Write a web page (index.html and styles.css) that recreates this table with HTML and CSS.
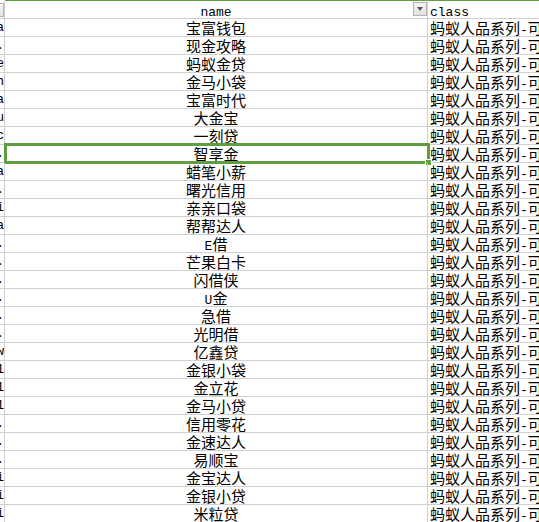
FILE: index.html
```html
<!DOCTYPE html>
<html>
<head>
<meta charset="utf-8">
<link rel="stylesheet" href="styles.css">
</head>
<body>
<div class="sheet">
  <div class="row head">
    <div class="c1"><span class="fbtn"></span></div>
    <div class="c2 hc2"><span class="lat">name</span><span class="fbtn abs"></span></div>
    <div class="c3"><span class="lat">class</span></div>
  </div>
  <div class="row"><div class="c1"><span class="lat">a</span></div><div class="c2">宝富钱包</div><div class="c3">蚂蚁人品系列<span class="lat">-</span>可信</div></div>
  <div class="row"><div class="c1"><span class="lat">.</span></div><div class="c2">现金攻略</div><div class="c3">蚂蚁人品系列<span class="lat">-</span>可信</div></div>
  <div class="row"><div class="c1"><span class="lat">e</span></div><div class="c2">蚂蚁金贷</div><div class="c3">蚂蚁人品系列<span class="lat">-</span>可信</div></div>
  <div class="row"><div class="c1"><span class="lat">h</span></div><div class="c2">金马小袋</div><div class="c3">蚂蚁人品系列<span class="lat">-</span>可信</div></div>
  <div class="row"><div class="c1"><span class="lat">a</span></div><div class="c2">宝富时代</div><div class="c3">蚂蚁人品系列<span class="lat">-</span>可信</div></div>
  <div class="row"><div class="c1"><span class="lat">u</span></div><div class="c2">大金宝</div><div class="c3">蚂蚁人品系列<span class="lat">-</span>可信</div></div>
  <div class="row"><div class="c1"><span class="lat">c</span></div><div class="c2">一刻贷</div><div class="c3">蚂蚁人品系列<span class="lat">-</span>可信</div></div>
  <div class="row sel"><div class="c1"><span class="lat">.</span></div><div class="c2">智享金</div><div class="c3">蚂蚁人品系列<span class="lat">-</span>可信</div><div class="selbox"></div><div class="handle"></div></div>
  <div class="row"><div class="c1"><span class="lat">a</span></div><div class="c2">蜡笔小薪</div><div class="c3">蚂蚁人品系列<span class="lat">-</span>可信</div></div>
  <div class="row"><div class="c1"><span class="lat">.</span></div><div class="c2">曙光信用</div><div class="c3">蚂蚁人品系列<span class="lat">-</span>可信</div></div>
  <div class="row"><div class="c1"><span class="lat">i</span></div><div class="c2">亲亲口袋</div><div class="c3">蚂蚁人品系列<span class="lat">-</span>可信</div></div>
  <div class="row"><div class="c1"><span class="lat">a</span></div><div class="c2">帮帮达人</div><div class="c3">蚂蚁人品系列<span class="lat">-</span>可信</div></div>
  <div class="row"><div class="c1"><span class="lat">.</span></div><div class="c2"><span class="lat">E</span>借</div><div class="c3">蚂蚁人品系列<span class="lat">-</span>可信</div></div>
  <div class="row"><div class="c1"><span class="lat">.</span></div><div class="c2">芒果白卡</div><div class="c3">蚂蚁人品系列<span class="lat">-</span>可信</div></div>
  <div class="row"><div class="c1"><span class="lat">.</span></div><div class="c2">闪借侠</div><div class="c3">蚂蚁人品系列<span class="lat">-</span>可信</div></div>
  <div class="row"><div class="c1"><span class="lat">.</span></div><div class="c2"><span class="lat">U</span>金</div><div class="c3">蚂蚁人品系列<span class="lat">-</span>可信</div></div>
  <div class="row"><div class="c1"><span class="lat">.</span></div><div class="c2">急借</div><div class="c3">蚂蚁人品系列<span class="lat">-</span>可信</div></div>
  <div class="row"><div class="c1"><span class="lat">.</span></div><div class="c2">光明借</div><div class="c3">蚂蚁人品系列<span class="lat">-</span>可信</div></div>
  <div class="row"><div class="c1"><span class="lat">w</span></div><div class="c2">亿鑫贷</div><div class="c3">蚂蚁人品系列<span class="lat">-</span>可信</div></div>
  <div class="row"><div class="c1"><span class="lat">1</span></div><div class="c2">金银小袋</div><div class="c3">蚂蚁人品系列<span class="lat">-</span>可信</div></div>
  <div class="row"><div class="c1"><span class="lat">1</span></div><div class="c2">金立花</div><div class="c3">蚂蚁人品系列<span class="lat">-</span>可信</div></div>
  <div class="row"><div class="c1"><span class="lat">1</span></div><div class="c2">金马小贷</div><div class="c3">蚂蚁人品系列<span class="lat">-</span>可信</div></div>
  <div class="row"><div class="c1"><span class="lat">.</span></div><div class="c2">信用零花</div><div class="c3">蚂蚁人品系列<span class="lat">-</span>可信</div></div>
  <div class="row"><div class="c1"><span class="lat">.</span></div><div class="c2">金速达人</div><div class="c3">蚂蚁人品系列<span class="lat">-</span>可信</div></div>
  <div class="row"><div class="c1"><span class="lat">.</span></div><div class="c2">易顺宝</div><div class="c3">蚂蚁人品系列<span class="lat">-</span>可信</div></div>
  <div class="row"><div class="c1"><span class="lat">i</span></div><div class="c2">金宝达人</div><div class="c3">蚂蚁人品系列<span class="lat">-</span>可信</div></div>
  <div class="row"><div class="c1"><span class="lat">i</span></div><div class="c2">金银小贷</div><div class="c3">蚂蚁人品系列<span class="lat">-</span>可信</div></div>
  <div class="row"><div class="c1"><span class="lat">i</span></div><div class="c2">米粒贷</div><div class="c3">蚂蚁人品系列<span class="lat">-</span>可信</div></div>
</div>
</body>
</html>
```
FILE: styles.css
```css
html, body {
  margin: 0;
  padding: 0;
  background: #ffffff;
}
body {
  width: 539px;
  height: 522px;
  overflow: hidden;
  font-family: "Noto Sans CJK SC", "Noto Sans", sans-serif;
  font-size: 15px;
  color: #000;
}
.sheet {
  display: flex;
  flex-direction: column;
  width: 539px;
}
.row {
  display: flex;
  height: 17px;
  line-height: 17px;
  border-bottom: 1px solid #d0d0d0;
  position: relative;
  white-space: nowrap;
}
.head {
  height: 17px;
}
.c1 {
  width: 4px;
  flex: none;
  overflow: hidden;
  display: flex;
  justify-content: flex-end;
  border-right: 1px solid #d0d0d0;
}
.c2 {
  width: 422px;
  flex: none;
  overflow: hidden;
  text-align: center;
  border-right: 1px solid #d0d0d0;
}
.c3 {
  flex: 1;
  overflow: hidden;
  padding-left: 2px;
}
.head .c2, .head .c3 {
  border-top: 1px solid #5f9f3f;
  margin-top: -1px;
  height: 17px;
}
.head {
  margin-top: 1px;
}
.hc2 {
  position: relative;
}
.lat {
  font-family: "Liberation Mono", monospace;
  font-size: 13px;
}
.head .lat {
  position: relative;
  top: 0px;
}
.fbtn {
  display: inline-block;
  flex: none;
  width: 12px;
  height: 12px;
  margin-top: 2px;
  border: 1px solid #b4b4b4;
  background: linear-gradient(#f4f4f4, #e2e2e2);
  position: relative;
}
.fbtn::after {
  content: "";
  position: absolute;
  left: 3px;
  top: 4px;
  border-left: 3px solid transparent;
  border-right: 3px solid transparent;
  border-top: 4px solid #555;
}
.fbtn.abs {
  position: absolute;
  right: 0;
  top: 1px;
  margin-top: 0;
}
.selbox {
  position: absolute;
  left: 4px;
  top: -2px;
  width: 420px;
  height: 15px;
  border: 3px solid #5f9f3f;
  pointer-events: none;
}
.handle {
  position: absolute;
  left: 425px;
  top: 14px;
  width: 5px;
  height: 5px;
  background: #5f9f3f;
  border: 1px solid #fff;
}
```
